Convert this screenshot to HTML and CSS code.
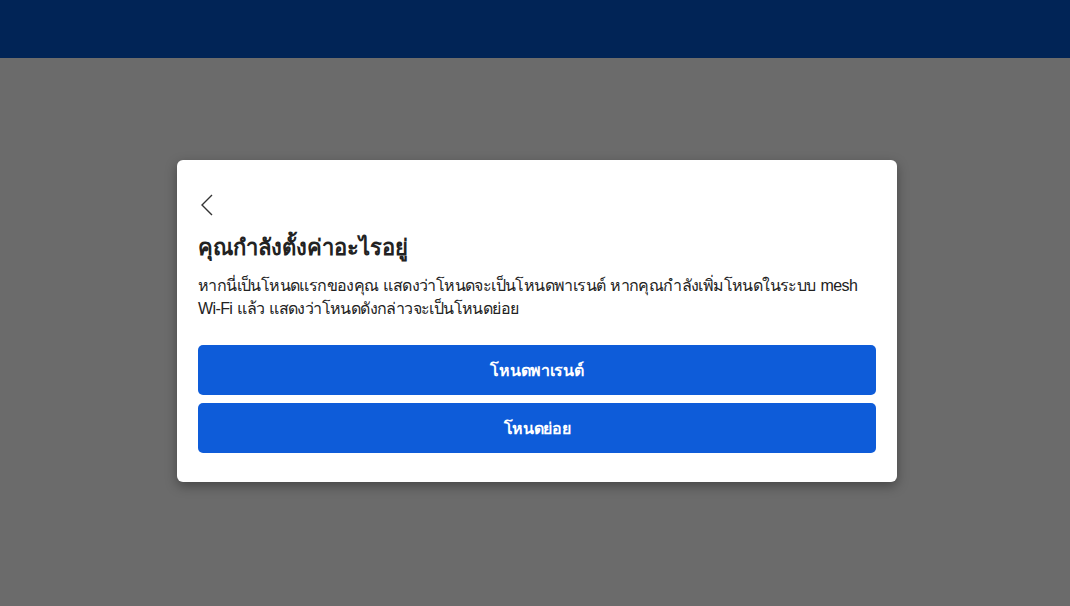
FILE: index.html
```html
<!DOCTYPE html>
<html lang="th">
<head>
<meta charset="utf-8">
<title>Setup</title>
<link rel="stylesheet" href="styles.css">
</head>
<body>
<header class="topbar"></header>
<main class="overlay">
  <section class="modal">
    <button class="back" aria-label="back">
      <svg width="14" height="22" viewBox="0 0 14 22"><path d="M12 1 L2 11 L12 21" fill="none" stroke="#333" stroke-width="1.4"/></svg>
    </button>
    <h1 class="title">คุณกำลังตั้งค่าอะไรอยู่</h1>
    <p class="desc">หากนี่เป็นโหนดแรกของคุณ แสดงว่าโหนดจะเป็นโหนดพาเรนต์ หากคุณกำลังเพิ่มโหนดในระบบ mesh Wi-Fi แล้ว แสดงว่าโหนดดังกล่าวจะเป็นโหนดย่อย</p>
    <div class="actions">
      <button class="btn">โหนดพาเรนต์</button>
      <button class="btn">โหนดย่อย</button>
    </div>
  </section>
</main>
</body>
</html>
```
FILE: styles.css
```css
html, body {
  margin: 0;
  padding: 0;
  height: 100%;
}
body {
  font-family: "Liberation Sans", "Noto Sans", sans-serif;
  background: #6b6b6b;
  display: flex;
  flex-direction: column;
}
.topbar {
  height: 58px;
  background: #012456;
  flex: none;
}
.overlay {
  flex: 1;
  background: #6b6b6b;
  padding-top: 102px;
}
.modal {
  width: 720px;
  box-sizing: border-box;
  margin-left: 177px;
  background: #fff;
  border-radius: 6px;
  box-shadow: 0 4px 12px rgba(0,0,0,0.35);
  padding: 34px 21px 29px 21px;
}
.back {
  display: block;
  border: 0;
  background: none;
  padding: 0;
  margin: 0 0 0 2px;
  width: 14px;
  height: 22px;
  cursor: pointer;
}
.back svg { display: block; }
.title {
  margin: 16px 0 0;
  font-size: 22px;
  font-weight: 700;
  color: #222;
  line-height: 32px;
}
.desc {
  margin: 10px 0 0;
  font-size: 16px;
  line-height: 23px;
  color: #222;
  letter-spacing: -0.6px;
  word-spacing: 1px;
}
.actions {
  margin-top: 25px;
  display: flex;
  flex-direction: column;
  gap: 8px;
}
.btn {
  height: 50px;
  border: 0;
  border-radius: 5px;
  background: #0e5cd9;
  color: #fff;
  font-family: "Liberation Sans", "Noto Sans", sans-serif;
  font-size: 16px;
  font-weight: 700;
  letter-spacing: -0.3px;
  cursor: pointer;
}
```
